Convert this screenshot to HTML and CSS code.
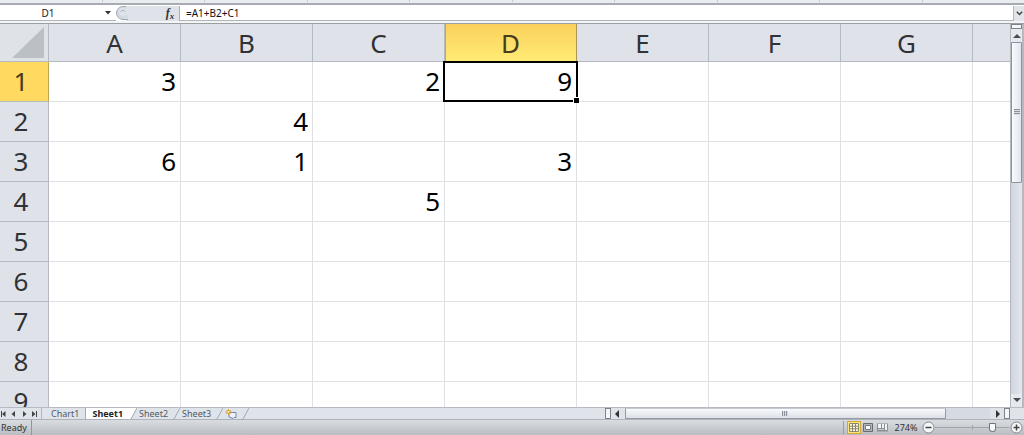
FILE: index.html
```html
<!DOCTYPE html>
<html lang="en">
<head>
<meta charset="utf-8">
<title>Sheet1</title>
<link rel="stylesheet" href="styles.css">
</head>
<body>
<div class="app">
  <div class="ribbon-edge"><i></i><i></i><i></i><i></i><i></i><i></i><i></i><i></i><i></i></div>
  <div class="formula-bar">
    <div class="name-box">
      <input class="name-input" type="text" value="D1" aria-label="Name box">
      <button class="icon-button name-arrow" aria-label="Open name list"><svg width="6" height="4" viewBox="0 0 6 4"><path d="M0 0h6L3 3.5z" fill="#333"/></svg></button>
    </div>
    <div class="fx-area">
      <svg width="12" height="14" viewBox="0 0 12 14"><path d="M10 .5H7a6.5 6.5 0 0 0 0 13h5" fill="#d4dae2" stroke="#a3a9b0"/><circle cx="7" cy="6" r="4" fill="#dfe3e9"/><path d="M4.500 5.500Q7 3 9.500 5.500" fill="none" stroke="#b1b6be"/></svg>
      <button class="icon-button fx" aria-label="Insert function"><em>f</em><em class="fx-x">x</em></button>
    </div>
    <input class="formula-input" type="text" value="=A1+B2+C1" aria-label="Formula">
    <button class="icon-button expand" aria-label="Expand formula bar"><svg width="7" height="5" viewBox="0 0 7 5"><path d="M.8.8l2.700 2.700L6.200.8" fill="none" stroke="#444" stroke-width="1.500"/></svg></button>
  </div>
  <div class="workspace">
    <div class="grid">
      <table class="sheet">
        <colgroup><col class="col-head"><col class="col"><col class="col"><col class="col"><col class="col"><col class="col"><col class="col"><col class="col"><col></colgroup>
        <thead><tr><th class="corner"><svg width="32" height="31" viewBox="0 0 32 31"><path d="M32 0v31H0z" fill="#bbc0c5"/></svg></th><th>A</th><th>B</th><th>C</th><th class="active-col">D</th><th>E</th><th>F</th><th>G</th><th></th></tr></thead>
        <tbody>
          <tr><th class="active-row">1</th><td>3</td><td></td><td>2</td><td class="selected">9</td><td></td><td></td><td></td><td></td></tr>
          <tr><th>2</th><td></td><td>4</td><td></td><td></td><td></td><td></td><td></td><td></td></tr>
          <tr><th>3</th><td>6</td><td>1</td><td></td><td>3</td><td></td><td></td><td></td><td></td></tr>
          <tr><th>4</th><td></td><td></td><td>5</td><td></td><td></td><td></td><td></td><td></td></tr>
          <tr><th>5</th><td></td><td></td><td></td><td></td><td></td><td></td><td></td><td></td></tr>
          <tr><th>6</th><td></td><td></td><td></td><td></td><td></td><td></td><td></td><td></td></tr>
          <tr><th>7</th><td></td><td></td><td></td><td></td><td></td><td></td><td></td><td></td></tr>
          <tr><th>8</th><td></td><td></td><td></td><td></td><td></td><td></td><td></td><td></td></tr>
          <tr><th>9</th><td></td><td></td><td></td><td></td><td></td><td></td><td></td><td></td></tr>
        </tbody>
      </table>
    </div>
    <div class="v-scroll">
      <div class="split-handle split-top"></div>
      <button class="icon-button v-arrow" aria-label="Scroll up"><svg width="8" height="5" viewBox="0 0 8 5"><path d="M0 5l4-4 4 4z" fill="#484d54"/></svg></button>
      <div class="v-track"><div class="v-thumb"><i class="v-grip"></i></div></div>
      <button class="icon-button v-arrow" aria-label="Scroll down"><svg width="8" height="5" viewBox="0 0 8 5"><path d="M0 0l4 4 4-4z" fill="#484d54"/></svg></button>
    </div>
  </div>
  <div class="tab-bar">
    <div class="tab-nav">
      <button class="icon-button" aria-label="First sheet"><svg width="5" height="6" viewBox="0 0 5 6"><path d="M4.500 0v6L1 3z" fill="#444"/><path d="M.5 0v6" stroke="#444"/></svg></button>
      <button class="icon-button" aria-label="Previous sheet"><svg width="5" height="6" viewBox="0 0 5 6"><path d="M4 0v6L.5 3z" fill="#444"/></svg></button>
      <button class="icon-button" aria-label="Next sheet"><svg width="5" height="6" viewBox="0 0 5 6"><path d="M1 0v6l3.500-3z" fill="#444"/></svg></button>
      <button class="icon-button" aria-label="Last sheet"><svg width="5" height="6" viewBox="0 0 5 6"><path d="M0 0v6l3.500-3z" fill="#444"/><path d="M4.500 0v6" stroke="#444"/></svg></button>
    </div>
    <div class="tabs">
      <button class="tab chart-tab">Chart1</button>
      <button class="tab active-tab">Sheet1</button>
      <svg width="8" height="12" viewBox="0 0 8 12"><path d="M0 0h8L2 11Q1 12 0 12z" fill="#fff"/><path d="M8 0L2 11l-2 1" fill="none" stroke="#a3a9b0"/></svg>
      <button class="tab">Sheet2</button>
      <svg width="8" height="12" viewBox="0 0 8 12"><path d="M8 0L2 11l-2 1" fill="none" stroke="#a3a9b0"/></svg>
      <button class="tab">Sheet3</button>
      <svg width="8" height="12" viewBox="0 0 8 12"><path d="M8 0L2 11l-2 1" fill="none" stroke="#a3a9b0"/></svg>
      <button class="icon-button new-tab" aria-label="Insert sheet"><svg width="12" height="10" viewBox="0 0 12 10"><path d="M4 3.500h7v5H9L8 9.500 4 8z" fill="#eef3fb" stroke="#7785a8"/><path d="M3.500 0v6M.5 3h6M1.500 1l4 4M5.500 1l-4 4" stroke="#d99a2b"/><circle cx="3.500" cy="3" r="1" fill="#fff2a8"/></svg></button>
      <svg width="8" height="12" viewBox="0 0 8 12"><path d="M8 0L2 11l-2 1" fill="none" stroke="#a3a9b0"/></svg>
    </div>
    <div class="h-scroll">
      <div class="split-handle split-side"></div>
      <button class="icon-button h-arrow" aria-label="Scroll left"><svg width="5" height="8" viewBox="0 0 5 8"><path d="M4 0v8L0 4z" fill="#333"/></svg></button>
      <div class="h-track"><div class="h-thumb"><i class="h-grip"></i></div></div>
      <button class="icon-button h-arrow" aria-label="Scroll right"><svg width="5" height="8" viewBox="0 0 5 8"><path d="M1 0v8l4-4z" fill="#333"/></svg></button>
      <div class="split-handle split-side"></div>
    </div>
    <div class="size-corner"></div>
  </div>
  <div class="status-bar">
    <span class="ready">Ready</span>
    <div class="views">
      <button class="icon-button view view-on" aria-label="Normal view"><svg width="10" height="9" viewBox="0 0 10 9"><path d="M.5.5h9v8h-9zM.5 3.200h9M.5 5.800h9M3.500.5v8M6.500.5v8" fill="#fffbe2" stroke="#8a8468"/></svg></button>
      <button class="icon-button view" aria-label="Page layout view"><svg width="10" height="9" viewBox="0 0 10 9"><path d="M.5.5h9v8h-9z" fill="#b3b8be" stroke="#666b72"/><path d="M2.500 2.500h5v4h-5z" fill="#fff" stroke="#777c83"/></svg></button>
      <button class="icon-button view" aria-label="Page break preview"><svg width="11" height="9" viewBox="0 0 11 9"><path d="M0 .5h11v8H0z" fill="#8b9097"/><path d="M1 1h3v4H1zM5 1h2v4H5zM8 1h2v6H8z" fill="#f2f3f5"/><path d="M1 6h6v1H1z" fill="#c7cbd0"/></svg></button>
    </div>
    <button class="zoom-level">274%</button>
    <button class="icon-button zoom-step" aria-label="Zoom out"><svg width="13" height="13" viewBox="0 0 13 13"><circle cx="6.500" cy="6.500" r="5.500" fill="#f5f6f7" stroke="#82878d"/><path d="M3.500 6.500h6" stroke="#444" stroke-width="1.500"/></svg></button>
    <input class="zoom-slider" type="range" min="0" max="100" value="80" aria-label="Zoom">
    <button class="icon-button zoom-step" aria-label="Zoom in"><svg width="13" height="13" viewBox="0 0 13 13"><circle cx="6.500" cy="6.500" r="5.500" fill="#f5f6f7" stroke="#82878d"/><path d="M3.500 6.500h6M6.500 3.500v6" stroke="#444" stroke-width="1.500"/></svg></button>
  </div>
</div>
</body>
</html>
```
FILE: styles.css
```css
* { box-sizing: border-box; }
body { margin: 0; font-family: "Noto Sans", "Open Sans", sans-serif; font-size: 9px; color: #222; }
button, input { font: inherit; color: inherit; margin: 0; padding: 0; border: 0; outline: 0; background: none; border-radius: 0; }
svg { display: block; flex: none; }
.app { display: flex; flex-direction: column; height: 100vh; overflow: hidden; background: #dfe3e8; }
.icon-button { display: flex; align-items: center; justify-content: center; flex: none; }

.ribbon-edge { display: flex; justify-content: space-evenly; flex: none; height: 5px; background: #e9edf0; border-bottom: 2px solid #a6acb1; }
.ribbon-edge i { width: 1px; height: 2px; background: #c3c8cd; }
.formula-bar { display: flex; flex: none; height: 19px; padding-top: 1px; background: #fff; border-bottom: 1px solid #9b9fa4; box-shadow: inset 0 -2px #f3f4f6, inset 0 -3px #b0b5ba; font-size: 10px; }
.name-box { display: flex; width: 116px; padding-bottom: 3px; }
.name-input { flex: 1; min-width: 0; padding-right: 4px; text-align: center; }
.name-arrow { width: 16px; }
.fx-area { display: flex; justify-content: space-between; width: 64px; height: 15px; background: linear-gradient(90deg, #fff 10px, #dfe3e9 10px); border-right: 1px solid #a9aeb4; }
.fx { width: 18px; font: bold 12px "Liberation Serif", serif; color: #333; }
.fx-x { font-size: 9px; align-self: flex-end; }
.formula-input { flex: 1; min-width: 0; padding: 0 6px 3px; color: #111; }
.expand { width: 11px; height: 15px; background: #e1e5ea; border-left: 1px solid #b3b8be; }

.workspace { display: flex; flex: 1; min-height: 0; }
.grid { flex: 1; min-width: 0; overflow: hidden; background: #fff; }
.sheet { width: 100%; table-layout: fixed; border-collapse: separate; border-spacing: 0; font-size: 26px; line-height: 32px; }
.col-head { width: 49px; }
.col { width: 132px; }
.sheet th, .sheet td { height: 40px; padding: 0 0 1px; overflow: hidden; }
.sheet th { font-weight: normal; color: #303236; background: #dfe2e8; border-right: 1px solid #b4bac0; border-bottom: 1px solid #b4bac0; }
.sheet tbody th { padding-right: 6px; }
.sheet thead th { height: 38px; padding-top: 2px; }
.sheet thead th:last-child { border-right: 0; }
.sheet thead .corner { padding: 0 4px 0 0; background: #dfe3e8; }
.corner svg { margin-left: auto; }
.sheet td { padding-right: 4px; text-align: right; color: #000; border-right: 1px solid #dfe0e1; border-bottom: 1px solid #dfe0e1; }
.sheet td:last-child { border-right: 0; }
.sheet .active-col { color: #473c1c; background: linear-gradient(#fbd05c, #ffeb74); border-right-color: #ab965a; box-shadow: inset 1px 0 #c9a74f; }
.sheet .active-row { color: #473c1c; background: #ffd960; border-right-color: #c3a451; }
.sheet td.selected { position: relative; overflow: visible; border-color: transparent; }
.selected::before { content: ""; position: absolute; inset: -1px -2px -1px -2px; border: 2px solid #000; }
.selected::after { content: ""; position: absolute; right: -3px; bottom: -2px; width: 5px; height: 5px; background: #000; border: solid #fff; border-width: 1px 0 0 1px; }

.v-scroll { display: flex; flex-direction: column; width: 14px; background: #dce0e7; border-right: 2px solid #b6bac0; border-left: 1px solid #b5bac1; }
.split-handle { flex: none; background: #f5f6f8; border: 1px solid #7d838a; }
.split-top { height: 5px; }
.v-arrow { height: 13px; background: #e6e9ee; }
.v-track { flex: 1; min-height: 0; background: linear-gradient(90deg, #cfd5df, #e3e7ed); }
.v-thumb { display: flex; align-items: center; justify-content: center; height: 40%; background: linear-gradient(90deg, #fafbfd, #e1e5f0); border: 1px solid #8d939e; border-radius: 1px; }
.v-grip { width: 6px; height: 6px; background: repeating-linear-gradient(#8c929b 0 1px, #d8dce3 1px 2px); }

.tab-bar { display: flex; flex: none; height: 13px; background: #dfe4eb; border-top: 1px solid #b6bbc1; border-bottom: 1px solid #aeb3b9; }
.tab-nav { display: flex; width: 42px; justify-content: space-between; padding: 0 4px 0 1px; border-right: 1px solid #b3b8be; }
.tabs { display: flex; flex: 1; min-width: 0; }
.tabs svg { align-self: flex-start; }
.tab { flex: none; padding: 0 4px 0 2px; height: 11px; line-height: 11px; color: #535960; }
.chart-tab { padding: 0 6px 0 9px; border-right: 1px solid #a3a9b0; }
.active-tab { padding: 0 6px; font-weight: bold; color: #222; background: #fff; }
.tabs .new-tab { padding: 0 4px 0 2px; }
.new-tab svg { align-self: center; }
.h-scroll { display: flex; width: 39.6%; }
.split-side { width: 6px; }
.h-arrow { width: 14px; }
.h-track { flex: 1; min-width: 0; background: #d6dbe3; }
.h-thumb { display: flex; align-items: center; justify-content: center; width: 88%; height: 11px; background: linear-gradient(#f9fafc, #dce0e7); border: 1px solid #949aa3; border-top-color: #c6cad1; border-radius: 1px; }
.h-grip { width: 6px; height: 5px; background: repeating-linear-gradient(90deg, #8c929b 0 1px, #d8dce3 1px 2px); }
.size-corner { width: 14px; }

.status-bar { display: flex; align-items: center; flex: none; height: 15px; padding-right: 1px; background: linear-gradient(#dadde0, #b9bdc2); }
.ready { width: 32px; padding-left: 1px; line-height: 15px; border-right: 1px solid #91969c; color: #333; }
.views { display: flex; margin-left: auto; padding-left: 3px; border-left: 1px solid #989da3; }
.view { width: 14px; height: 13px; border: 1px solid transparent; }
.view-on { background: #ffe680; border-color: #d4a931; }
.zoom-level { width: 32px; padding-left: 2px; line-height: 15px; color: #333; }
.zoom-step { width: 14px; }
.zoom-slider { appearance: none; width: 74px; height: 13px; background: linear-gradient(90deg, transparent 50%, #a0a5ab 50% 51%, transparent 51%) center / 100% 5px no-repeat, linear-gradient(#a0a5ab, #a0a5ab) center / 100% 1px no-repeat; }
.zoom-slider::-webkit-slider-thumb { appearance: none; width: 7px; height: 9px; background: #f7f8f9; border: 1px solid #71767d; border-radius: 1px 1px 4px 4px; }
```
